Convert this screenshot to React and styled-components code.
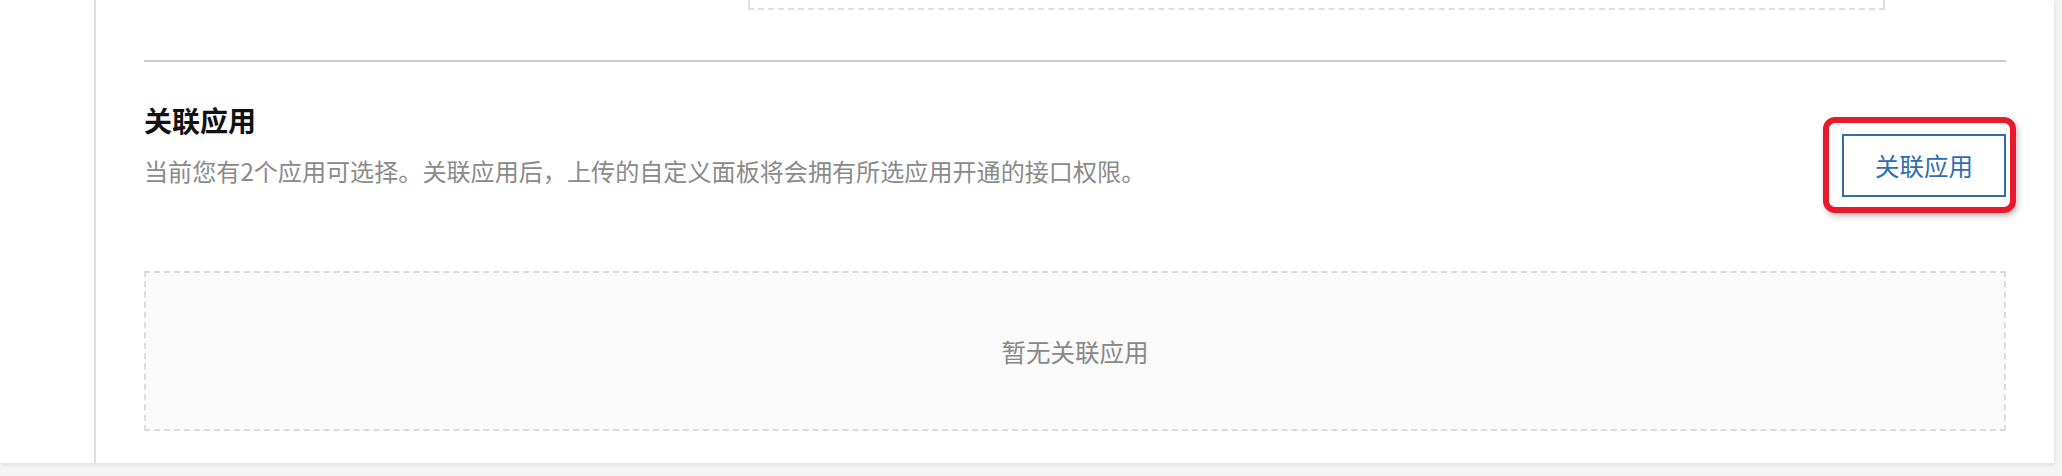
import React from "react";
import styled, { createGlobalStyle } from "styled-components";

const GlobalStyle = createGlobalStyle`
  html, body {
    margin: 0;
    padding: 0;
    background: #f4f4f4;
    font-family: "Noto Sans CJK SC", "Noto Sans", sans-serif;
  }
`;

const Page = styled.div`
  height: 476px;
  background: #f4f4f4;
`;

const Frame = styled.div`
  width: 2054px;
  height: 464px;
  display: flex;
  background: #fff;
  box-shadow: 1px 1px 3px rgba(0, 0, 0, 0.08);
  border-bottom: 1px solid #e6e6e6;
  box-sizing: border-box;
`;

const Sidebar = styled.aside`
  width: 94px;
  flex-shrink: 0;
  border-right: 2px solid #dddddd;
`;

const Panel = styled.main`
  flex: 1;
  display: flex;
  flex-direction: column;
  padding: 0 48px;
`;

const PrevBox = styled.div`
  height: 8px;
  margin: 0 121px 0 604px;
  border: 2px dashed #dedede;
  border-top: none;
`;

const Divider = styled.hr`
  margin: 50px 0 0;
  border: none;
  height: 2px;
  background: #cccccc;
`;

const SectionHead = styled.div`
  display: flex;
  justify-content: space-between;
  align-items: flex-start;
  padding-top: 38px;
`;

const HeadText = styled.div`
  display: flex;
  flex-direction: column;
`;

const Title = styled.h3`
  margin: 0;
  font-size: 28px;
  line-height: 40px;
  font-weight: 700;
  color: #111;
`;

const Desc = styled.p`
  margin: 13px 0 0;
  font-size: 24.1px;
  line-height: 36px;
  color: #8a8a8a;
`;

const ButtonWrap = styled.div`
  position: relative;
  margin-top: 34px;
`;

const Highlight = styled.span`
  position: absolute;
  left: -19px;
  right: -10px;
  top: -17px;
  bottom: -16px;
  border: 6px solid #e8192c;
  border-radius: 12px;
  box-shadow: 2px 3px 6px rgba(0, 0, 0, 0.25);
  pointer-events: none;
`;

const OutlineButton = styled.button`
  width: 164px;
  height: 63px;
  background: #fff;
  border: 2px solid #2e6db4;
  color: #2e6db4;
  font-family: inherit;
  font-size: 24.5px;
  padding: 0;
  cursor: pointer;
`;

const EmptyBox = styled.div`
  margin-top: 74px;
  height: 160px;
  box-sizing: border-box;
  border: 2px dashed #dcdcdc;
  background: #fafafa;
  display: flex;
  align-items: center;
  justify-content: center;
  font-size: 24.5px;
  color: #888;
`;

export default function App() {
  return (
    <Page>
      <GlobalStyle />
      <Frame>
        <Sidebar />
        <Panel>
          <PrevBox />
          <Divider />
          <SectionHead>
            <HeadText>
              <Title>关联应用</Title>
              <Desc>当前您有2个应用可选择。关联应用后，上传的自定义面板将会拥有所选应用开通的接口权限。</Desc>
            </HeadText>
            <ButtonWrap>
              <Highlight />
              <OutlineButton>关联应用</OutlineButton>
            </ButtonWrap>
          </SectionHead>
          <EmptyBox>暂无关联应用</EmptyBox>
        </Panel>
      </Frame>
    </Page>
  );
}
